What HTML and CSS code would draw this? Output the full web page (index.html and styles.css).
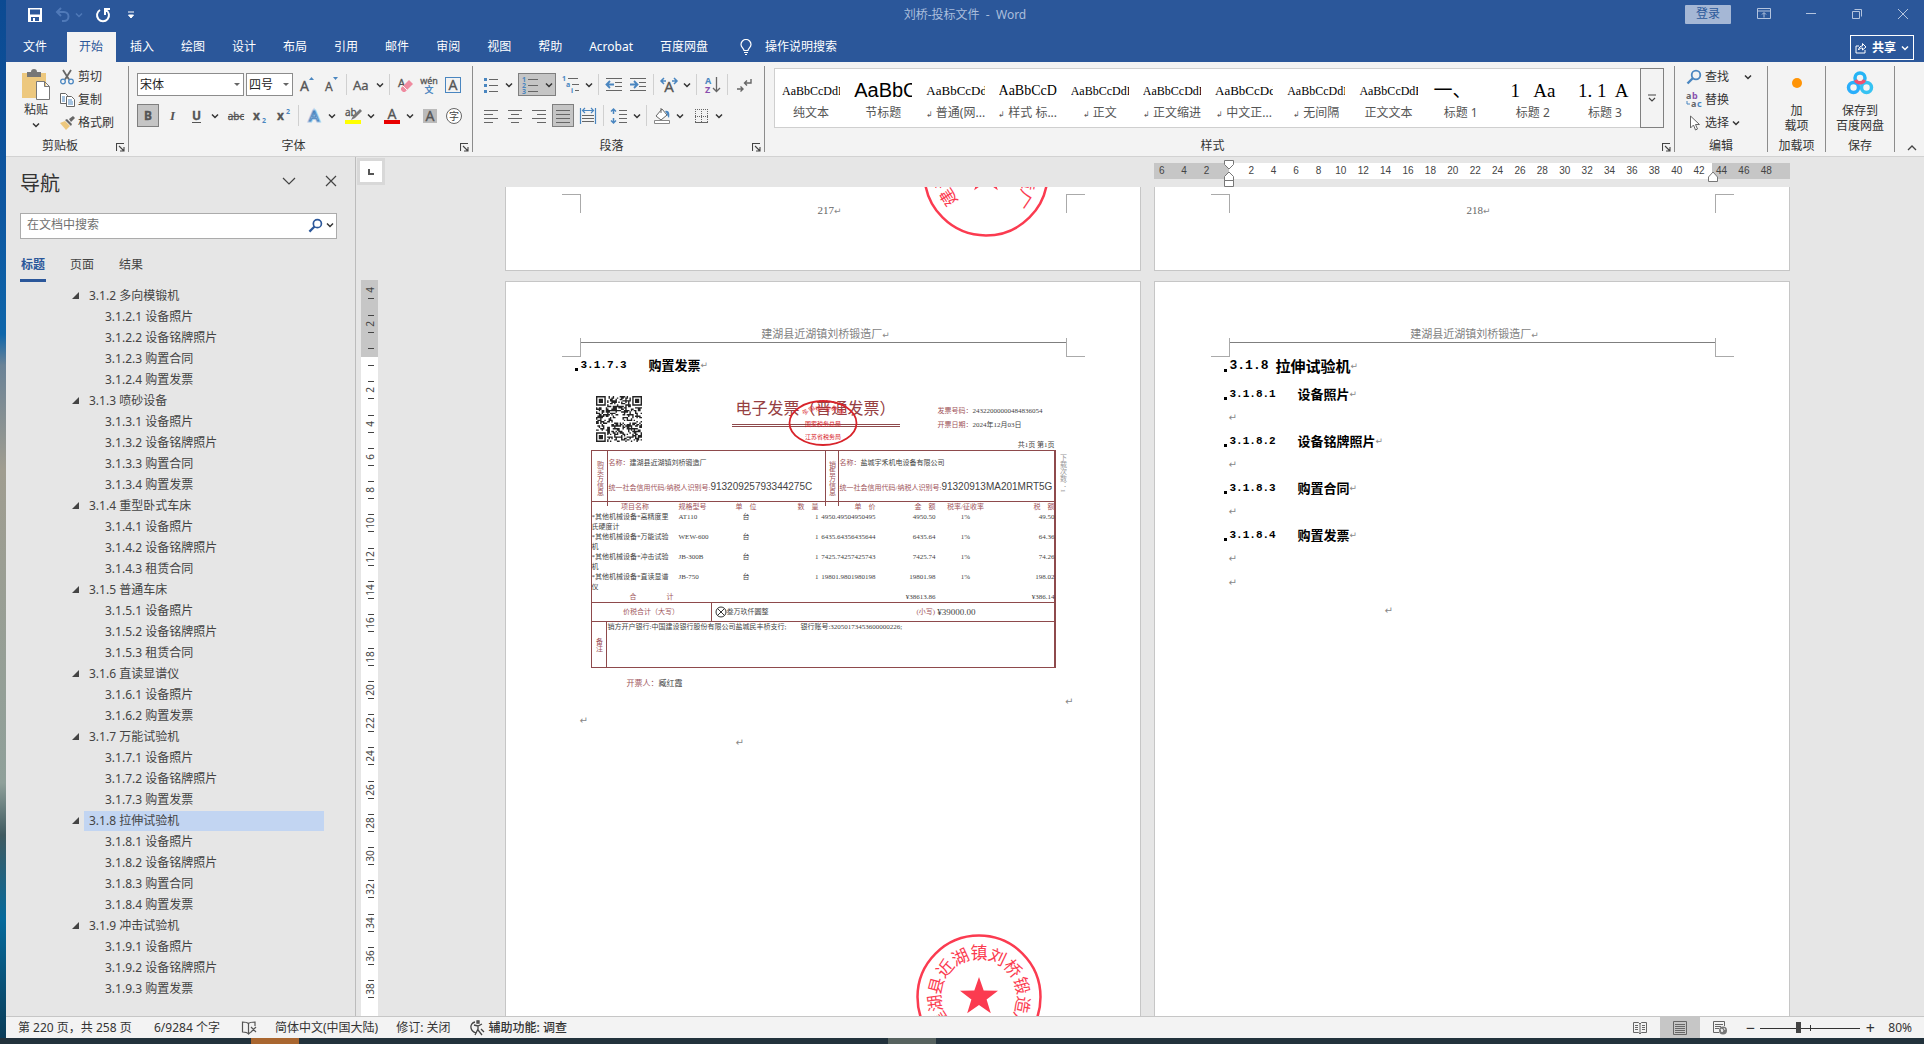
FILE: index.html
```html
<!DOCTYPE html>
<html lang="zh-CN">
<head>
<meta charset="utf-8">
<title>刘桥-投标文件 - Word</title>
<link rel="stylesheet" href="styles.css">
</head>
<body>
<svg class="defs" aria-hidden="true">
  <symbol id="chev" viewBox="0 0 8 8"><path d="M1 2.5l3 3 3-3" fill="none" stroke="currentColor" stroke-width="1.5"/></symbol>
  <symbol id="launch" viewBox="0 0 9 9"><path d="M.5 8V.5H8M3 3l4.500 4.500M8 4v4H4" fill="none" stroke="#444" stroke-width="1.100"/></symbol>
  <symbol id="lens" viewBox="0 0 16 16"><g fill="none" stroke="currentColor"><circle cx="10" cy="6" r="4.300" stroke-width="1.800"/><path d="M7 9l-5.500 5.500" stroke-width="2.400"/></g></symbol>
</svg>

<div class="screen">
<div class="app">
  <header class="top">
    <div class="titlebar">
      <div class="quick">
        <button aria-label="保存"><svg width="16" height="16" viewBox="0 0 16 16"><path fill="#fff" fill-rule="evenodd" d="M1 1h14v14H1zM3 2.500v5h10v-5zM4 10v4h2v-3h2v3h4v-4z"/></svg></button>
        <button class="dim" aria-label="撤消"><svg width="16" height="16" viewBox="0 0 16 16"><path d="M6 1L2 5l4 4M2 5h7a4.500 4.500 0 0 1 0 9H7" fill="none" stroke="currentColor" stroke-width="2"/></svg><svg class="chev"><use href="#chev"/></svg></button>
        <button aria-label="重复"><svg width="16" height="16" viewBox="0 0 16 16"><path d="M5 3a6 6 0 1 0 6 0M10 8V2h5" fill="none" stroke="#fff" stroke-width="2"/></svg></button>
        <button class="custom" aria-label="自定义快速访问工具栏"><svg width="8" height="8" viewBox="0 0 8 8"><path d="M1 1h6M1.500 4L4 7l2.500-3z" stroke="#fff" fill="#fff"/></svg></button>
      </div>
      <div class="title">刘桥-投标文件&nbsp; -&nbsp; Word</div>
      <div class="wincontrols">
        <button class="login">登录</button>
        <button aria-label="功能区显示选项"><svg width="14" height="12" viewBox="0 0 14 12"><path d="M.5.5h13v10H.5zM.5 3h13M7 9.500V5M5 6.500L7 4.500l2 2" fill="none" stroke="#b4c4de"/></svg></button>
        <button aria-label="最小化"><svg width="12" height="12" viewBox="0 0 12 12"><path d="M1 5.500h10" stroke="#b4c4de"/></svg></button>
        <button aria-label="还原"><svg width="12" height="12" viewBox="0 0 12 12"><path d="M1.500 3.500h7v7h-7zM3.500 1.500h7v7" fill="none" stroke="#b4c4de"/></svg></button>
        <button aria-label="关闭"><svg width="12" height="12" viewBox="0 0 12 12"><path d="M1 1l10 10M11 1L1 11" stroke="#b4c4de"/></svg></button>
      </div>
    </div>
    <nav class="tabs">
      <a href="#">文件</a><a href="#" class="on">开始</a><a href="#">插入</a><a href="#">绘图</a><a href="#">设计</a><a href="#">布局</a><a href="#">引用</a><a href="#">邮件</a><a href="#">审阅</a><a href="#">视图</a><a href="#">帮助</a><a href="#">Acrobat</a><a href="#">百度网盘</a>
      <a href="#" class="tell"><svg width="12" height="16" viewBox="0 0 12 16"><path d="M4 11.500c0-2-3-3-3-6a5 5 0 0 1 10 0c0 3-3 4-3 6zM4 13.500h4M5 15.500h2" fill="none" stroke="#fff" stroke-width="1.200"/></svg>操作说明搜索</a>
      <button class="share"><svg width="12" height="12" viewBox="0 0 12 12"><path d="M4 4H1v7h9V8M3.500 8c.5-3 2-4 4-4V1.500L11 5 7.500 8V6c-2 0-3 .5-4 2z" fill="none" stroke="#fff"/></svg>共享<svg class="chev"><use href="#chev"/></svg></button>
    </nav>
  </header>

  <section class="ribbon">
    <div class="group clip">
      <div class="gbody">
        <button class="big"><svg width="30" height="32" viewBox="0 0 30 32"><path fill="#edc87e" d="M1 4h24v25H1z"/><path fill="#777" d="M6 3h4a3 3 0 0 1 6 0h4v5H6z"/><path fill="#fff" stroke="#777" d="M15.500 12.500h8l5 5v13h-13zM23.500 12.500v5h5"/></svg><span>粘贴</span><svg class="chev"><use href="#chev"/></svg></button>
        <div class="stack">
          <button><svg width="16" height="16" viewBox="0 0 16 16"><path d="M4 1l6 9.500M12 1L6 10.500" stroke="#666" stroke-width="1.800"/><g fill="none" stroke="#4a86c0" stroke-width="1.300"><circle cx="4" cy="12.500" r="2.300"/><circle cx="12" cy="12.500" r="2.300"/></g></svg>剪切</button>
          <button><svg width="16" height="16" viewBox="0 0 16 16"><g fill="#fff" stroke="#666"><path d="M1.500 1.500h5l2 2v8h-7z"/><path d="M7.500 4.500h5l3 3v7h-8z"/></g><path d="M3 5h3M3 7h3M3 9h3M9 8h4M9 10h5M9 12h5" stroke="#4a86c0"/></svg>复制</button>
          <button><svg width="16" height="16" viewBox="0 0 16 16"><path fill="#edc87e" d="M1 8l5-2 5 5-4 4z"/><path fill="#666" d="M6 5l2-1 5 5-1 2zM10 4l4-3 2 2-4 4z"/></svg>格式刷</button>
        </div>
      </div>
      <div class="glabel"><span>剪贴板</span><button class="launch" aria-label="剪贴板设置"><svg><use href="#launch"/></svg></button></div>
    </div>

    <div class="group font">
      <div class="gbody rows">
        <div class="row">
          <label class="combo wide"><select aria-label="字体"><option>宋体</option></select></label>
          <label class="combo"><select aria-label="字号"><option>四号</option></select></label>
          <button aria-label="增大字号"><svg viewBox="0 0 24 24"><text class="ic" x="5" y="18" font-size="14">A</text><path fill="#4a86c0" d="M14 7l2.500-3L19 7z"/></svg></button>
          <button aria-label="减小字号"><svg viewBox="0 0 24 24"><text class="ic" x="6" y="18" font-size="12">A</text><path fill="#4a86c0" d="M14 4l2.500 3L19 4z"/></svg></button>
          <i class="sep"></i>
          <button class="dd" aria-label="更改大小写"><svg viewBox="0 0 24 24"><text class="ic" x="3" y="17" font-size="13">Aa</text></svg><svg class="chev"><use href="#chev"/></svg></button>
          <i class="sep"></i>
          <button aria-label="清除格式"><svg viewBox="0 0 24 24"><text class="ic" x="5" y="14" font-size="11">A</text><path fill="#ef8ba0" d="M8 15l8-8 4 4-8 8h-2l-2-2z"/><path d="M10 13l4 4" stroke="#f7f7f7"/></svg></button>
          <button aria-label="拼音指南"><svg viewBox="0 0 24 24"><text class="ic" x="12" y="11" font-size="9" text-anchor="middle">wén</text><text x="12" y="20" font-size="9" font-weight="700" fill="#4a86c0" text-anchor="middle">文</text></svg></button>
          <button aria-label="字符边框"><svg viewBox="0 0 24 24"><rect x="4.500" y="4.500" width="15" height="15" fill="none" stroke="#4a86c0"/><text class="ic" x="12" y="17" font-size="14" text-anchor="middle">A</text></svg></button>
        </div>
        <div class="row">
          <button class="sel" aria-label="加粗"><svg viewBox="0 0 24 24"><text class="ic b" x="8" y="16" font-size="12">B</text></svg></button>
          <button aria-label="倾斜"><svg viewBox="0 0 24 24"><text x="9" y="16" font-size="13" font-style="italic" font-weight="700" font-family="Liberation Serif" fill="#555">I</text></svg></button>
          <button class="dd" aria-label="下划线"><svg viewBox="0 0 24 24"><text class="ic b" x="7" y="16" font-size="12">U</text><path d="M7 18.500h9" stroke="#555"/></svg><svg class="chev"><use href="#chev"/></svg></button>
          <button aria-label="删除线"><svg viewBox="0 0 24 24"><text class="ic" x="13" y="16" font-size="10" text-anchor="middle">abc</text><path d="M5 12.500h16" stroke="#555"/></svg></button>
          <button aria-label="下标"><svg viewBox="0 0 24 24"><text class="ic b" x="6" y="16" font-size="12">x</text><text x="15" y="19" font-size="7" font-weight="700" fill="#4a86c0">2</text></svg></button>
          <button aria-label="上标"><svg viewBox="0 0 24 24"><text class="ic b" x="6" y="16" font-size="12">x</text><text x="15" y="10" font-size="7" font-weight="700" fill="#4a86c0">2</text></svg></button>
          <i class="sep"></i>
          <button class="dd" aria-label="文本效果"><svg viewBox="0 0 24 24"><text x="12" y="17" font-size="15" text-anchor="middle" fill="#fff" stroke="#a9cbea" stroke-width="3">A</text><text x="12" y="17" font-size="15" text-anchor="middle" fill="#fff" stroke="#4a86c0" stroke-width="1">A</text></svg><svg class="chev"><use href="#chev"/></svg></button>
          <button class="dd" aria-label="突出显示"><svg viewBox="0 0 24 24"><text class="ic" x="4" y="12" font-size="10">ab</text><path d="M19 5l-7 7-2 4 4-2 7-7z" fill="#777"/><path fill="#ff0" d="M4 16h16v4H4z"/></svg><svg class="chev"><use href="#chev"/></svg></button>
          <button class="dd" aria-label="字体颜色"><svg viewBox="0 0 24 24"><text class="ic" x="12" y="15" font-size="14" text-anchor="middle">A</text><path fill="#e80000" d="M4 16h16v4H4z"/></svg><svg class="chev"><use href="#chev"/></svg></button>
          <button aria-label="字符底纹"><svg viewBox="0 0 24 24"><path fill="#bbb" d="M5 5h14v14H5z"/><text class="ic" x="12" y="17" font-size="14" text-anchor="middle">A</text></svg></button>
          <button aria-label="带圈字符"><svg viewBox="0 0 24 24"><circle cx="12" cy="12" r="7.500" fill="#fff" stroke="#666"/><text x="12" y="16" font-size="10" text-anchor="middle" fill="#444">字</text></svg></button>
        </div>
      </div>
      <div class="glabel"><span>字体</span><button class="launch" aria-label="字体设置"><svg><use href="#launch"/></svg></button></div>
    </div>

    <div class="group para">
      <div class="gbody rows">
        <div class="row">
          <button class="dd" aria-label="项目符号"><svg viewBox="0 0 24 24"><path fill="#4a86c0" d="M5 5h3v3H5zM5 11h3v3H5zM5 17h3v3H5z"/><path d="M10 6.500h9M10 12.500h9M10 18.500h9" stroke="#666"/></svg><svg class="chev"><use href="#chev"/></svg></button>
          <button class="dd sel" aria-label="编号"><svg viewBox="0 0 24 24"><g font-size="7" font-weight="700" fill="#4a86c0"><text x="3" y="9">1</text><text x="3" y="15">2</text><text x="3" y="21">3</text></g><path d="M9 6.500h10M9 12.500h10M9 18.500h10" stroke="#666"/></svg><svg class="chev"><use href="#chev"/></svg></button>
          <button class="dd" aria-label="多级列表"><svg viewBox="0 0 24 24"><g font-size="7" font-weight="700" fill="#4a86c0"><text x="3" y="8">1</text><text x="7" y="14">a</text><text x="12" y="20">i</text></g><path d="M9 5.500h10M13 11.500h7M16 17.500h4" stroke="#666"/></svg><svg class="chev"><use href="#chev"/></svg></button>
          <i class="sep"></i>
          <button aria-label="减少缩进量"><svg viewBox="0 0 24 24"><path d="M4 5.500h16M13 9.500h7M13 13.500h7M4 17.500h16" stroke="#666"/><path d="M12 11.500H5M8 8l-3.500 3.500L8 15" stroke="#4a86c0" stroke-width="1.800" fill="none"/></svg></button>
          <button aria-label="增加缩进量"><svg viewBox="0 0 24 24"><path d="M4 5.500h16M13 9.500h7M13 13.500h7M4 17.500h16" stroke="#666"/><path d="M4 11.500h7M8 8l3.500 3.500L8 15" stroke="#4a86c0" stroke-width="1.800" fill="none"/></svg></button>
          <i class="sep"></i>
          <button class="dd" aria-label="中文版式"><svg viewBox="0 0 24 24"><text class="ic" x="12" y="19" font-size="15" text-anchor="middle">A</text><path d="M9 8H4M7 5L4 8l3 3M15 8h5M17 5l3 3-3 3" stroke="#4a86c0" stroke-width="1.500" fill="none"/></svg><svg class="chev"><use href="#chev"/></svg></button>
          <i class="sep"></i>
          <button aria-label="排序"><svg viewBox="0 0 24 24"><text x="5" y="11" font-size="9" font-weight="700" fill="#4a86c0">A</text><text x="5" y="20" font-size="9" font-weight="700" fill="#8a4fae">Z</text><path d="M16.500 4v14M13 15l3.500 3.500L20 15" stroke="#666" stroke-width="1.300" fill="none"/></svg></button>
          <i class="sep"></i>
          <button aria-label="显示编辑标记"><svg viewBox="0 0 24 24"><path d="M20 6v4h-6M16 7.500L13.500 10l2.500 2.500M6 16h6M9.500 13.500L12 16l-2.500 2.500" stroke="#666" stroke-width="1.400" fill="none"/></svg></button>
        </div>
        <div class="row">
          <button aria-label="左对齐"><svg viewBox="0 0 24 24"><path d="M5 6.500h14M5 10.500h9M5 14.500h14M5 18.500h9" stroke="#666"/></svg></button>
          <button aria-label="居中"><svg viewBox="0 0 24 24"><path d="M5 6.500h14M8 10.500h8M5 14.500h14M8 18.500h8" stroke="#666"/></svg></button>
          <button aria-label="右对齐"><svg viewBox="0 0 24 24"><path d="M5 6.500h14M10 10.500h9M5 14.500h14M10 18.500h9" stroke="#666"/></svg></button>
          <button class="sel" aria-label="两端对齐"><svg viewBox="0 0 24 24"><path d="M5 6.500h14M5 10.500h14M5 14.500h14M5 18.500h14" stroke="#666"/></svg></button>
          <button aria-label="分散对齐"><svg viewBox="0 0 24 24"><path d="M4.500 4v16M19.500 4v16M7 6.500h10M9 4L6.500 6.500 9 9M15 4l2.500 2.500L15 9" stroke="#4a86c0" fill="none" stroke-width="1.200"/><path d="M6 11.500h12M6 14.500h12M6 17.500h12" stroke="#666"/></svg></button>
          <i class="sep"></i>
          <button class="dd" aria-label="行距"><svg viewBox="0 0 24 24"><path d="M6.500 5v5M4 7.500L6.500 5 9 7.500M6.500 14v5M4 16.500L6.500 19 9 16.500" stroke="#4a86c0" stroke-width="1.500" fill="none"/><path d="M12 6.500h8M12 10.500h8M12 14.500h8M12 18.500h8" stroke="#666"/></svg><svg class="chev"><use href="#chev"/></svg></button>
          <i class="sep"></i>
          <button class="dd" aria-label="底纹"><svg viewBox="0 0 24 24"><path d="M6 12l6-7 5 6-6 5z" fill="#fff" stroke="#666"/><path d="M11 9V4" stroke="#666"/><path d="M15 7c4-1 5 2 4 7-1-1-2-3-2-4z" fill="#4a86c0"/><path d="M4.500 16.500h15v3h-15z" fill="#fff" stroke="#888"/></svg><svg class="chev"><use href="#chev"/></svg></button>
          <button class="dd" aria-label="边框"><svg viewBox="0 0 24 24"><path d="M6 5.500h13M6 12.500h13M6.500 5v13M12.500 5v13M18.500 5v13" stroke="#666" stroke-dasharray="1 1"/><path d="M6 18.500h13" stroke="#666"/></svg><svg class="chev"><use href="#chev"/></svg></button>
        </div>
      </div>
      <div class="glabel"><span>段落</span><button class="launch" aria-label="段落设置"><svg><use href="#launch"/></svg></button></div>
    </div>

    <div class="group styles">
      <div class="gbody">
        <div class="gallery">
          <button class="st"><span class="smp">AaBbCcDdE</span><span>纯文本</span></button>
          <button class="st"><span class="smp sans">AaBbC</span><span>节标题</span></button>
          <button class="st"><span class="smp m">AaBbCcDd</span><span><small>↲</small> 普通(网...</span></button>
          <button class="st"><span class="smp l">AaBbCcD</span><span><small>↲</small> 样式 标...</span></button>
          <button class="st"><span class="smp">AaBbCcDdE</span><span><small>↲</small> 正文</span></button>
          <button class="st"><span class="smp">AaBbCcDdE</span><span><small>↲</small> 正文缩进</span></button>
          <button class="st"><span class="smp m">AaBbCcDd</span><span><small>↲</small> 中文正...</span></button>
          <button class="st"><span class="smp">AaBbCcDdE</span><span><small>↲</small> 无间隔</span></button>
          <button class="st"><span class="smp">AaBbCcDdE</span><span>正文文本</span></button>
          <button class="st"><span class="smp h">一、</span><span>标题 1</span></button>
          <button class="st"><span class="smp h">&nbsp;1&nbsp;&nbsp; Aa</span><span>标题 2</span></button>
          <button class="st"><span class="smp h">1. 1&nbsp; A</span><span>标题 3</span></button>
          <button class="more" aria-label="其他样式"><svg width="8" height="8" viewBox="0 0 8 8"><path d="M0 1h8M1 4l3 3 3-3" fill="none" stroke="#444" stroke-width="1.200"/></svg></button>
        </div>
      </div>
      <div class="glabel"><span>样式</span><button class="launch" aria-label="样式设置"><svg><use href="#launch"/></svg></button></div>
    </div>

    <div class="group edit">
      <div class="gbody"><div class="stack">
        <button class="find"><svg width="16" height="16" color="#4a86c0"><use href="#lens"/></svg><span>查找</span><svg class="chev"><use href="#chev"/></svg></button>
        <button><svg width="16" height="16" viewBox="0 0 16 16"><g font-size="9" font-weight="700"><text x="0" y="7" fill="#666">a</text><text x="6" y="7" fill="#8a4fae">b</text><text x="5" y="15" fill="#666">a</text><text x="11" y="15" fill="#4a86c0">c</text></g><path d="M1 9v3h3" stroke="#4a86c0" fill="none"/></svg>替换</button>
        <button><svg width="16" height="16" viewBox="0 0 16 16"><path d="M4.500 1v12l3-3 2 5 2-1-2-4.500h4z" fill="#fff" stroke="#666"/></svg>选择<svg class="chev"><use href="#chev"/></svg></button>
      </div></div>
      <div class="glabel"><span>编辑</span></div>
    </div>
    <div class="group addin">
      <div class="gbody"><button class="big"><svg width="28" height="32" viewBox="0 0 28 32"><circle cx="14" cy="14" r="5" fill="#ff9406"/></svg><span>加<br>载项</span></button></div>
      <div class="glabel"><span>加载项</span></div>
    </div>
    <div class="group save">
      <div class="gbody"><button class="big"><svg width="28" height="32" viewBox="0 0 28 32"><g fill="none" stroke-width="3.500"><circle cx="14" cy="9" r="5" stroke="#25b4f5"/><circle cx="7.500" cy="18.500" r="5" stroke="#29aefb"/><circle cx="20.500" cy="18.500" r="5" stroke="#36c2f2"/><path d="M9.500 11a5 5 0 0 0 9 0" stroke="#f0506e"/></g></svg><span>保存到<br>百度网盘</span></button></div>
      <div class="glabel"><span>保存</span></div>
    </div>
    <button class="collapse" aria-label="折叠功能区"><svg width="10" height="8" viewBox="0 0 10 8"><path d="M1 6l4-4 4 4" fill="none" stroke="#444" stroke-width="1.300"/></svg></button>
  </section>

  <main class="work">
    <aside class="nav">
      <div class="navhead"><h2>导航</h2>
        <button aria-label="任务窗格选项"><svg width="14" height="12" viewBox="0 0 14 12"><path d="M1 3l6 6 6-6" fill="none" stroke="#444" stroke-width="1.200"/></svg></button>
        <button aria-label="关闭导航"><svg width="12" height="12" viewBox="0 0 12 12"><path d="M1 1l10 10M11 1L1 11" stroke="#444" stroke-width="1.200"/></svg></button>
      </div>
      <div class="search"><input type="text" aria-label="在文档中搜索" placeholder="在文档中搜索"><svg width="15" height="15" color="#2b579a"><use href="#lens"/></svg><svg class="chev"><use href="#chev"/></svg></div>
      <div class="navtabs"><a href="#" class="on">标题</a><a href="#">页面</a><a href="#">结果</a></div>
      <ul class="tree">
        <li><a href="#">3.1.2 多向模锻机</a><ul><li><a href="#">3.1.2.1 设备照片</a></li><li><a href="#">3.1.2.2 设备铭牌照片</a></li><li><a href="#">3.1.2.3 购置合同</a></li><li><a href="#">3.1.2.4 购置发票</a></li></ul></li>
        <li><a href="#">3.1.3 喷砂设备</a><ul><li><a href="#">3.1.3.1 设备照片</a></li><li><a href="#">3.1.3.2 设备铭牌照片</a></li><li><a href="#">3.1.3.3 购置合同</a></li><li><a href="#">3.1.3.4 购置发票</a></li></ul></li>
        <li><a href="#">3.1.4 重型卧式车床</a><ul><li><a href="#">3.1.4.1 设备照片</a></li><li><a href="#">3.1.4.2 设备铭牌照片</a></li><li><a href="#">3.1.4.3 租赁合同</a></li></ul></li>
        <li><a href="#">3.1.5 普通车床</a><ul><li><a href="#">3.1.5.1 设备照片</a></li><li><a href="#">3.1.5.2 设备铭牌照片</a></li><li><a href="#">3.1.5.3 租赁合同</a></li></ul></li>
        <li><a href="#">3.1.6 直读显谱仪</a><ul><li><a href="#">3.1.6.1 设备照片</a></li><li><a href="#">3.1.6.2 购置发票</a></li></ul></li>
        <li><a href="#">3.1.7 万能试验机</a><ul><li><a href="#">3.1.7.1 设备照片</a></li><li><a href="#">3.1.7.2 设备铭牌照片</a></li><li><a href="#">3.1.7.3 购置发票</a></li></ul></li>
        <li><a href="#" class="cur">3.1.8 拉伸试验机</a><ul><li><a href="#">3.1.8.1 设备照片</a></li><li><a href="#">3.1.8.2 设备铭牌照片</a></li><li><a href="#">3.1.8.3 购置合同</a></li><li><a href="#">3.1.8.4 购置发票</a></li></ul></li>
        <li><a href="#">3.1.9 冲击试验机</a><ul><li><a href="#">3.1.9.1 设备照片</a></li><li><a href="#">3.1.9.2 设备铭牌照片</a></li><li><a href="#">3.1.9.3 购置发票</a></li></ul></li>
      </ul>
    </aside>

    <div class="vcol">
      <button class="tabstop" aria-label="制表符"><svg width="6" height="6" viewBox="0 0 6 6"><path d="M1 0v5h5" fill="none" stroke="#555" stroke-width="2"/></svg></button>
      <svg class="vruler" id="vruler"></svg>
    </div>

    <div class="doc">
      <div class="hrow">
        <div class="hruler"><div class="nums" id="hnums"></div>
          <svg class="mark left" width="12" height="30" viewBox="0 0 12 30"><g fill="#fff" stroke="#777"><path d="M1.500 1.500h9v4L6 10 1.500 5.500zM6 13l4.500 4.500v4h-9v-4zM1.500 21.500h9v6h-9z"/></g></svg>
          <svg class="mark right" width="12" height="12" viewBox="0 0 12 12"><path fill="#fff" stroke="#777" d="M6 1l4.500 5v4.500h-9V6z"/></svg>
        </div>
      </div>
      <div class="pages">
        <article class="page foot"><i class="c tl"></i><i class="c tr"></i><p class="pno">217<b class="ret">↵</b></p><svg class="seal s1" viewBox="-64 -64 128 128"><use href="#seal"/></svg></article>
        <article class="page foot"><i class="c tl"></i><i class="c tr"></i><p class="pno">218<b class="ret">↵</b></p></article>

        <article class="page">
          <i class="c bl"></i><i class="c br"></i>
          <header>建湖县近湖镇刘桥锻造厂<b class="ret">↵</b></header>
          <h4><span class="n">3.1.7.3</span>购置发票<b class="ret">↵</b></h4>
          <div class="invoice">
            <div class="ihead">
              <svg class="qr" id="qr" viewBox="0 0 33 33" role="img" aria-label="二维码"></svg>
              <div class="ititle">电子发票（普通发票）</div>
              <div class="inum"><p><em>发票号码：</em>24322000000484836054</p><p><em>开票日期：</em>2024年12月03日</p><p class="pg">共1页 第1页</p></div>
              <svg class="taxseal" width="70" height="48" viewBox="-35 -24 70 48"><g fill="none" stroke="#d8232a"><ellipse rx="33.500" ry="22" stroke-width="1.800"/></g><g text-anchor="middle" fill="#d8232a" font-size="6"><text transform="rotate(-58) translate(0 -19)">全</text><text transform="rotate(-38) translate(0 -16)">国</text><text transform="rotate(-18) translate(0 -13)">统</text><text y="-12">一</text><text transform="rotate(18) translate(0 -13)">发</text><text transform="rotate(38) translate(0 -16)">票</text><text transform="rotate(58) translate(0 -19)">章</text><text y="3">国家税务总局</text><text y="16">江苏省税务局</text></g></svg>
            </div>
            <div class="ibox">
              <div class="parties">
                <div class="vt">购买方信息</div>
                <div class="pt"><p><em>名称：</em>建湖县近湖镇刘桥锻造厂</p><p><em>统一社会信用代码/纳税人识别号:</em><span class="code">91320925793344275C</span></p></div>
                <div class="vt">销售方信息</div>
                <div class="pt"><p><em>名称：</em>盐城宇禾机电设备有限公司</p><p><em>统一社会信用代码/纳税人识别号:</em><span class="code">91320913MA201MRT5G</span></p></div>
              </div>
              <table class="items">
                <colgroup><col class="w1"><col class="w2"><col class="w3"><col class="w4"><col class="w5"><col class="w6"><col class="w6"><col class="w6"></colgroup>
                <thead><tr><th class="ctr">项目名称</th><th class="lft">规格型号</th><th class="ctr">单　位</th><th>数　量</th><th>单　价</th><th>金　额</th><th class="ctr">税率/征收率</th><th>税　额</th></tr></thead>
                <tbody>
                <tr><td>*其他机械设备*高精度里氏硬度计</td><td>AT110</td><td>台</td><td>1</td><td>4950.49504950495</td><td>4950.50</td><td>1%</td><td>49.50</td></tr>
                <tr><td>*其他机械设备*万能试验机</td><td>WEW-600</td><td>台</td><td>1</td><td>6435.64356435644</td><td>6435.64</td><td>1%</td><td>64.36</td></tr>
                <tr><td>*其他机械设备*冲击试验机</td><td>JB-300B</td><td>台</td><td>1</td><td>7425.74257425743</td><td>7425.74</td><td>1%</td><td>74.26</td></tr>
                <tr><td>*其他机械设备*直读显谱仪</td><td>JB-750</td><td>台</td><td>1</td><td>19801.9801980198</td><td>19801.98</td><td>1%</td><td>198.02</td></tr>
                </tbody>
                <tfoot><tr><th colspan="2" class="sum"><span>合</span><span>计</span></th><td></td><td></td><td></td><td>¥38613.86</td><td></td><td>¥386.14</td></tr></tfoot>
              </table>
              <div class="total"><em>价税合计（大写）</em><p><svg width="12" height="12" viewBox="0 0 12 12"><path d="M2.500 2.500l7 7M9.500 2.500l-7 7" stroke="#333"/><circle cx="6" cy="6" r="5" fill="none" stroke="#333"/></svg>叁万玖仟圆整</p><p class="fig"><em>(小写)</em> ¥39000.00</p></div>
              <div class="remark"><div class="vt">备注</div><p>销方开户银行:中国建设银行股份有限公司盐城民丰桥支行;<span>银行账号:32050173453600000226;</span></p></div>
              <div class="dl">下载次数：1</div>
            </div>
            <p class="issuer"><em>开票人：</em>臧红霞</p>
          </div>
          <p class="pr end"><b class="ret">↵</b></p>
          <p class="pr"><b class="ret">↵</b></p>
          <p class="pr third"><b class="ret">↵</b></p>
          <svg class="seal s2" viewBox="-64 -64 128 128">
            <g id="seal">
              <circle r="61.500" fill="none" stroke="#fb3b50" stroke-width="2.500"/>
              <path fill="#fb3b50" d="M0-20L4.700-6.500 19-6.200 7.600 2.500 11.800 16.200 0 8-11.800 16.200-7.600 2.500-19-6.200-4.700-6.500z"/>
              <g class="seal-text" text-anchor="middle">
                <text transform="rotate(-122)" y="-38">建</text><text transform="rotate(-98)" y="-38">湖</text>
                <text transform="rotate(-75)" y="-38">县</text><text transform="rotate(-50)" y="-38">近</text>
                <text transform="rotate(-25)" y="-38">湖</text><text y="-38">镇</text>
                <text transform="rotate(25)" y="-38">刘</text><text transform="rotate(50)" y="-38">桥</text>
                <text transform="rotate(75)" y="-38">锻</text><text transform="rotate(100)" y="-38">造</text>
                <text transform="rotate(124)" y="-38">厂</text>
              </g>
            </g>
          </svg>
        </article>

        <article class="page">
          <i class="c bl"></i><i class="c br"></i>
          <header>建湖县近湖镇刘桥锻造厂<b class="ret">↵</b></header>
          <h3><span class="n">3.1.8</span>拉伸试验机<b class="ret">↵</b></h3>
          <h4><span class="n">3.1.8.1</span>设备照片<b class="ret">↵</b></h4><p class="gap"><b class="ret">↵</b></p>
          <h4><span class="n">3.1.8.2</span>设备铭牌照片<b class="ret">↵</b></h4><p class="gap"><b class="ret">↵</b></p>
          <h4><span class="n">3.1.8.3</span>购置合同<b class="ret">↵</b></h4><p class="gap"><b class="ret">↵</b></p>
          <h4><span class="n">3.1.8.4</span>购置发票<b class="ret">↵</b></h4><p class="gap"><b class="ret">↵</b></p>
          <p class="gap"><b class="ret">↵</b></p>
          <p class="gap mid"><b class="ret">↵</b></p>
        </article>
      </div>
    </div>
  </main>

  <footer class="status">
    <span class="pgs">第 220 页，共 258 页</span><span class="words">6/9284 个字</span>
    <svg width="16" height="14" viewBox="0 0 16 14"><path d="M7.500 2.500C6 1 4 1 1.500 1v10c2.500 0 4.500 0 6 2 1-1 2-2 3-2M7.500 2.500V13M7.500 2.500C9 1 11 1 14 1v4M10 6l5 5M15 6l-5 5" fill="none" stroke="#555" stroke-width="1.200"/></svg>
    <span>简体中文(中国大陆)</span><span>修订: 关闭</span>
    <span class="acc"><svg width="16" height="16" viewBox="0 0 16 16"><path d="M6 2a5 5 0 0 0-4 6c.5 2.500 2 4 5 5M5 5l4 1 4-2M9 6v4l4 5M9 9l-3 6M8 1h2v2H8zM12 9l3 3" fill="none" stroke="#444" stroke-width="1.300"/></svg>辅助功能: 调查</span>
    <div class="views">
      <button aria-label="阅读视图"><svg width="14" height="14" viewBox="0 0 14 14"><path d="M.5 1.500h5L7 3l1.500-1.500h5v10h-5L7 13l-1.500-1.500h-5zM7 3v10M2 4.500h3M2 6.500h3M2 8.500h3M9 4.500h3M9 6.500h3M9 8.500h3" fill="none" stroke="#666"/></svg></button>
      <button class="on" aria-label="页面视图"><svg width="14" height="14" viewBox="0 0 14 14"><path d="M.5.5h13v13H.5zM2 3.500h10M2 5.500h10M2 7.500h10M2 9.500h10M2 11.500h10" fill="none" stroke="#666"/></svg></button>
      <button aria-label="Web 版式"><svg width="14" height="14" viewBox="0 0 14 14"><path d="M6 11.500H.5V.5h11V5M2 3.500h8M2 5.500h6M2 7.500h4" fill="none" stroke="#666"/><circle cx="10" cy="9.500" r="4" fill="#777"/><path d="M8 8l2 1-1 2zM11 7l1 2" stroke="#eee" fill="#eee"/></svg></button>
    </div>
    <div class="zoom"><button aria-label="缩小">−</button><input type="range" min="0" max="100" value="38" aria-label="缩放"><button aria-label="放大">+</button></div>
    <span class="pct">80%</span>
  </footer>
</div>
<div class="taskbar"><i class="a"></i><i class="b"></i></div>
</div>
<script src="main.js"></script>
</body>
</html>
```
FILE: styles.css
```css
* { box-sizing: border-box; }
body { margin: 0; font: 12px/16px "Noto Sans", "Noto Sans CJK SC", sans-serif; color: #333; }
p, h2, h3, h4, ul { margin: 0; padding: 0; }
ul { list-style: none; }
em, i { font-style: normal; }
a { color: inherit; text-decoration: none; }
button { font: inherit; color: inherit; background: none; border: 0; padding: 0; margin: 0; display: flex; align-items: center; justify-content: center; }
svg { display: block; flex: none; font-family: "Noto Sans", "Noto Sans CJK SC", sans-serif; }
.defs { position: absolute; width: 0; height: 0; }
.chev { width: 8px; height: 8px; }

.screen { height: 100vh; display: flex; flex-direction: column; padding-left: 6px; overflow: hidden;
  background: linear-gradient(#0c4a92, #0d56a0 20%, #0e66aa 32%, #6a8296 35%, #a09d90 45%, #8fa09a 75%, #3f5a60 80%, #056a9c 88%, #0b3a55); }
.app { flex: 1; min-height: 0; display: flex; flex-direction: column; background: #e6e6e6; }
.taskbar { height: 6px; margin-left: -6px; background: #22323c; display: flex; padding-left: 251px; gap: 589px; }
.taskbar i { width: 48px; background: #a9662f; }
.taskbar .b { background: #56625f; }

/* title bar and tabs */
.top { background: #2b579a; color: #fff; }
.titlebar { height: 30px; display: grid; grid-template-columns: 1fr auto 1fr; align-items: center; }
.quick { display: flex; align-items: center; gap: 12px; padding-left: 21px; }
.quick .dim { color: #4f79b8; gap: 4px; }
.quick .custom { margin-left: 4px; }
.title { color: #aabedc; white-space: pre; }
.wincontrols { display: flex; justify-content: flex-end; align-items: center; gap: 34px; padding: 0 15px 2px 0; }
.login { background: #a5b7d5; color: #2b579a; width: 46px; height: 19px; border-radius: 1px; margin-right: -8px; }
.tabs { display: flex; height: 32px; padding: 2px 10px 0 3px; }
.tabs a { padding: 7px 13px 0 14px; }
.tabs a:first-child { padding-right: 20px; }
.tabs .on { background: #f3f3f3; color: #2b579a; padding: 7px 13px 0 12px; }
.tabs .tell { display: flex; gap: 13px; padding-left: 19px; align-items: flex-start; }
.share { margin: 3px 0 2px auto; border: 1px solid #fff; width: 64px; height: 25px; gap: 5px; font-weight: 700; }

/* ribbon */
.ribbon { display: flex; height: 95px; padding-top: 4px; background: #f3f3f3; border-bottom: 1px solid #d2d2d2; }
.group { height: 86px; border-right: 1px solid #8c8c8c; display: flex; flex-direction: column; }
.gbody { height: 70px; display: flex; }
.glabel { height: 16px; display: flex; align-items: center; position: relative; justify-content: center; padding: 3px 14px 0 0; }
.edit .glabel, .addin .glabel, .save .glabel { padding-right: 0; }
.launch { position: absolute; right: 3px; bottom: 0; }
.launch svg { width: 9px; height: 9px; }
.big { flex-direction: column; justify-content: flex-start; line-height: 15px; }
.clip { width: 123px; }
.clip .gbody { padding: 3px 0 0 15px; gap: 8px; }
.clip .big { line-height: 16px; }
.clip .big span { margin: 1px 0 3px; }
.stack { display: flex; flex-direction: column; gap: 7px; padding-top: 3px; white-space: nowrap; }
.clip .stack { padding-top: 0; }
.stack button { gap: 3px; justify-content: flex-start; }
.font { width: 344px; }
.para { width: 292px; }
.rows { flex-direction: column; padding: 7px 0 0 8px; gap: 8px; }
.para .rows { padding-left: 6px; }
.row { display: flex; height: 23px; align-items: center; }
.row button { width: 24px; height: 23px; }
.row button svg:first-child { width: 24px; height: 24px; }
.row .dd { width: 36px; }
.row .dd + .dd { margin-left: 3px; }
.row .dd + button:not(.dd) { margin-left: 2px; }
.row .chev { margin: 0 2px; }
.row .sel { background: #c5c5c5; border: 1px solid #7f7f7f; width: 22px; margin: 0 2px 0 1px; }
.font .sel { margin: 0 2px 0 0; }
.row .dd.sel { width: 38px; margin-right: 0; }
.row .sep { width: 1px; height: 21px; background: #d0d0d0; margin: 0 3px; }
.ic { fill: #555; stroke: #555; stroke-width: .3px; }
.ic.b { font-weight: 700; }
.combo { position: relative; width: 47px; height: 23px; margin-right: 2px; }
.combo.wide { width: 107px; }
.combo select { appearance: none; width: 100%; height: 100%; border: 1px solid #8c8c8c; border-radius: 0; background: #fff; font: inherit; color: #222; padding: 0 2px; }
.combo::after { content: ""; position: absolute; right: 4px; top: 10px; border: 3px solid transparent; border-top-color: #666; border-bottom: 0; }
.styles { flex: 1; min-width: 0; }
.styles .gbody { padding: 2px 10px 0 9px; }
.gallery { flex: 1; min-width: 0; height: 60px; display: flex; background: #fff; border: 1px solid #cfcfcf; }
.st { flex: 1; min-width: 0; flex-direction: column; justify-content: flex-start; color: #555; padding: 10px 7px 0; white-space: nowrap; }
.st small { font-size: 8px; }
.smp { width: 100%; height: 26px; line-height: 24px; overflow: hidden; text-align: left; color: #000; font-family: "Liberation Serif", serif; font-size: 12px; }
.smp.m { font-size: 13px; }
.smp.l { font-size: 14px; }
.smp.sans { font: 20px/22px "Liberation Sans", sans-serif; }
.smp.h { font: 19px/24px "Liberation Serif", "Noto Sans CJK SC", serif; padding-left: 2px; }
.more { width: 24px; margin: -1px; height: 60px; border: 1px solid #808080; background: #f3f3f3; }
.edit { width: 93px; }
.edit .gbody { padding-left: 11px; }
.edit .find { width: 66px; }
.edit .find .chev { margin-left: auto; }
.addin { width: 58px; }
.save { width: 69px; }
.addin .gbody, .save .gbody { justify-content: center; padding-top: 3px; }
.addin .big span, .save .big span { margin-top: 2px; }
.collapse { width: 29px; padding: 74px 0 0 5px; }

/* workspace */
.work { flex: 1; min-height: 0; display: flex; overflow: hidden; }
.nav { width: 350px; border-right: 1px solid #bcbcbc; padding: 12px 18px 0 14px; }
.navhead { display: flex; align-items: center; height: 30px; gap: 29px; }
.navhead h2 { font-size: 20px; font-weight: 400; line-height: 30px; margin-right: auto; }
.navhead button { height: 16px; margin-top: -6px; }
.search { display: flex; align-items: center; gap: 3px; height: 26px; margin-top: 14px; background: #fff; border: 1px solid #ababab; padding: 0 2px 2px 6px; }
.search input { flex: 1; min-width: 0; border: 0; outline: 0; padding: 0; font: inherit; background: none; }
.search input::placeholder { color: #707070; }
.navtabs { display: flex; gap: 23px; margin-top: 17px; color: #444; }
.navtabs a { height: 26px; padding: 1px 1px 0; }
.navtabs .on { color: #2b579a; font-weight: 700; border-bottom: 3px solid #2b579a; }
.tree { padding: 4px 13px 0 52px; color: #444; line-height: 20px; }
.tree li ul { padding: 0; }
.tree a { display: block; height: 20px; margin: 0 0 1px 12px; padding-left: 5px; }
.tree li li a { padding-left: 21px; }
.tree > li { position: relative; }
.tree > li::before { content: ""; position: absolute; left: 0; top: 6px; border: solid transparent; border-width: 0 0 7px 7px; border-bottom-color: #444; }
.tree .cur { background: #c2d5f2; }

.vcol { width: 30px; padding: 1px 0 0 1px; display: flex; flex-direction: column; }
.tabstop { width: 28px; height: 27px; background: #fff; border: 3px solid #d8d8d8; flex: none; }
.vruler { width: 17px; flex: 1; margin: 95px 0 0 4px; font-size: 10px; }

.doc { flex: 1; min-width: 0; padding-right: 16px; overflow: hidden; }
.hrow, .pages { display: grid; grid-template-columns: 636px 636px; column-gap: 13px; justify-content: center; }
.hrow { height: 30px; }
.hruler { grid-column: 2; position: relative; height: 16px; margin-top: 6px; background: linear-gradient(90deg, #c6c6c6 75px, #fff 75px 558px, #c6c6c6 558px); }
.nums { display: grid; grid-template-columns: repeat(28, 1fr); margin: 0 12px 0 -3px; text-align: center; font: 10px/16px "Liberation Sans", sans-serif; color: #444; }
.mark { position: absolute; }
.mark.left { left: 69px; top: -4px; }
.mark.right { left: 553px; top: 8px; }

/* document pages */
.pages { row-gap: 10px; }
.page { position: relative; height: 898px; background: #fff; border: 1px solid #c6c6c6; padding: 44px 74px 0; overflow: hidden; color: #000; }
.page.foot { height: 84px; border-top: 0; padding-top: 15px; }
.page header { text-align: center; font-size: 11px; line-height: 16px; color: #7f7f7f; border-bottom: 1px solid #7f7f7f; margin-bottom: 12px; padding-left: 6px; }
.pno { text-align: center; font: 11px/16px "Liberation Serif", serif; color: #666; padding-left: 14px; }
.ret { font: 9px/12px "DejaVu Sans", sans-serif; color: #888; }
.c { position: absolute; width: 19px; height: 19px; border: 0 solid #aaa; }
.tl, .tr { top: 7px; border-top-width: 1px; }
.bl, .br { top: 56px; border-bottom-width: 1px; }
.tl, .bl { left: 56px; border-right-width: 1px; }
.tr, .br { right: 55px; border-left-width: 1px; }
.seal { position: absolute; width: 128px; height: 128px; }
.s1 { left: 416px; top: -77px; }
.s2 { left: 409px; top: 651px; }
.seal-text { font-size: 17px; fill: #fb3b50; }
.page h3, .page h4 { display: flex; align-items: center; font-size: 13px; line-height: 20px; font-weight: 700; margin-left: -5px; }
.page h3 { font-size: 15px; margin-bottom: 7px; line-height: 22px; }
.page h3::before, .page h4::before { content: ""; width: 3px; height: 3px; background: #000; margin: 9px 3px 0 0; }
.n { font: 700 11px/20px "Liberation Mono", monospace; width: 68px; }
.page h3 .n { font-size: 13px; width: 46px; }
.gap { line-height: 26px; height: 27px; }
.gap .ret, .pr .ret { font-size: 10px; }
h4:nth-last-of-type(1) ~ .gap { height: 24px; }
.page .gap.mid { padding: 4px 0 0 156px; }
.pr { line-height: 20px; }
.pr.end { text-align: right; margin: 2px -8px 0 0; height: 19px; }
.pr.third { padding-left: 156px; margin-top: 2px; }

/* invoice */
.invoice { width: 465px; margin: 21px 0 0 11px; font: 7px/10px "Liberation Serif", "Noto Sans CJK SC", serif; color: #444; }
.invoice em, .invoice th, .invoice .vt { color: #a0545a; font-weight: 400; }
.ihead { position: relative; display: flex; height: 54px; padding-left: 5px; }
.qr { width: 46px; height: 46px; }
.ititle { width: 168px; height: 31px; margin-left: 90px; text-align: center; font-size: 16px; line-height: 26px; color: #963f42; border-bottom: 3px double #8e4a4c; white-space: nowrap; }
.inum { flex: 1; padding: 10px 0 0 38px; }
.inum p { height: 14px; white-space: nowrap; }
.inum .pg { text-align: right; margin-top: 6px; padding-right: 1px; }
.taxseal { position: absolute; left: 197px; top: 3px; }
.ibox { position: relative; border: 1px solid #8e4a4c; border-right-width: 2px; }
.parties { display: grid; grid-template-columns: 15px 218px 13px 1fr; height: 51px; border-bottom: 1px solid #8e4a4c; }
.vt { writing-mode: vertical-rl; text-orientation: upright; text-align: center; line-height: 14px; }
.parties > div + div { border-left: 1px solid #8e4a4c; }
.parties .vt:nth-child(3) { line-height: 12px; }
.pt { padding: 7px 0 0 1px; white-space: nowrap; }
.pt p { height: 24px; }
.code { font: 10px/10px "Liberation Sans", sans-serif; }
.items { width: 100%; table-layout: fixed; border-collapse: collapse; height: 100px; }
.items th, .items td { padding: 0; text-align: right; vertical-align: top; }
.items th:last-child, .items td:last-child { padding-right: 1px; }
.w1 { width: 87px; } .w2 { width: 50px; } .w3 { width: 35px; } .w4 { width: 55px; } .w5 { width: 57px; } .w6 { width: 60px; }
.items tbody td:nth-child(1), .items tbody td:nth-child(2), .items .lft { text-align: left; }
.items tbody td:nth-child(1) { padding-right: 4px; }
.items tbody td:nth-child(3), .items tbody td:nth-child(7), .items .ctr { text-align: center; }
.items .sum { text-align: left; padding-left: 38px; }
.sum span { margin-right: 30px; }
.total { display: grid; grid-template-columns: 120px 205px 1fr; height: 20px; line-height: 18px; border: solid #8e4a4c; border-width: 1px 0; }
.total > em { text-align: center; border-right: 1px solid #8e4a4c; }
.total p { display: flex; align-items: center; padding-left: 3px; }
.total .fig { font-size: 9px; padding: 0; gap: 2px; }
.total .fig em { font-size: 7px; }
.remark { display: grid; grid-template-columns: 15px 1fr; height: 45px; }
.remark .vt { border-right: 1px solid #8e4a4c; }
.remark p { padding-left: 1px; white-space: nowrap; }
.remark span { margin-left: 14px; }
.dl { position: absolute; left: 466px; top: 3px; writing-mode: vertical-rl; color: #999; }
.issuer { padding: 11px 0 0 36px; font-size: 8px; }

/* status bar */
.status { height: 22px; display: flex; align-items: center; background: #f3f3f3; border-top: 1px solid #c6c6c6; padding: 0 12px; gap: 18px; white-space: nowrap; }
.pgs { min-width: 118px; }
.words { min-width: 69px; }
.acc { display: flex; gap: 4px; font-weight: 500; }
.views { display: flex; margin-left: auto; height: 21px; }
.views button { width: 40px; }
.views .on { background: #c6c6c6; }
.zoom { display: flex; align-items: center; gap: 4px; margin: 0 -6px 0 -14px; }
.zoom button { width: 12px; font-size: 16px; }
.zoom input { appearance: none; width: 100px; height: 12px; margin: 0; background: linear-gradient(#333, #333) 0 6px / 100% 1px no-repeat, linear-gradient(#333, #333) 50px 3px / 1px 6px no-repeat; }
.zoom input::-webkit-slider-thumb { appearance: none; width: 5px; height: 11px; background: #444; border-radius: 0; }
```
FILE: main.js
```js
// Horizontal ruler labels: 6 4 2 (origin) 2 4 ... 48
var nums = document.getElementById('hnums');
for (var n = -6; n <= 48; n += 2) {
  var s = document.createElement('span');
  s.textContent = n === 0 ? '' : Math.abs(n);
  nums.appendChild(s);
}

// Vertical ruler: rotated labels with a tick on either side of each
var out = '<rect width="17" height="100%" fill="#fff"/><rect width="17" height="77" fill="#c6c6c6"/>';
for (var v = -4; v <= 38; v += 2) {
  var y = Math.round(77 + v * 16.64);
  out += '<path d="M7 ' + (v === -4 ? y + 8.5 : y - 8.5) + 'h6M7 ' + (y + 8.5) + 'h6" stroke="#444"/>';
  if (v) out += '<text transform="translate(13 ' + y + ') rotate(-90)" text-anchor="middle" fill="#444">' + Math.abs(v) + '</text>';
}
document.getElementById('vruler').innerHTML = out;

// QR modules: three finder patterns plus data cells
var d = '', seed = 7;
function finder(x, y) { return 'M' + x + ' ' + y + 'h7v7h-7zM' + (x + 1) + ' ' + (y + 1) + 'v5h5v-5zM' + (x + 2) + ' ' + (y + 2) + 'h3v3h-3z'; }
for (var r = 0; r < 33; r++) for (var c = 0; c < 33; c++) {
  seed = (seed * 1103515245 + 12345) % 2147483648;
  var corner = (r < 8 && (c < 8 || c > 24)) || (r > 24 && c < 8);
  var logo = r > 13 && r < 19 && c > 13 && c < 19;
  if (!corner && !logo && seed / 2147483648 > 0.5) d += 'M' + c + ' ' + r + 'h1v1h-1z';
}
d += finder(0, 0) + finder(26, 0) + finder(0, 26);
document.getElementById('qr').innerHTML = '<path fill="#222" fill-rule="evenodd" d="' + d + '"/>';
```
